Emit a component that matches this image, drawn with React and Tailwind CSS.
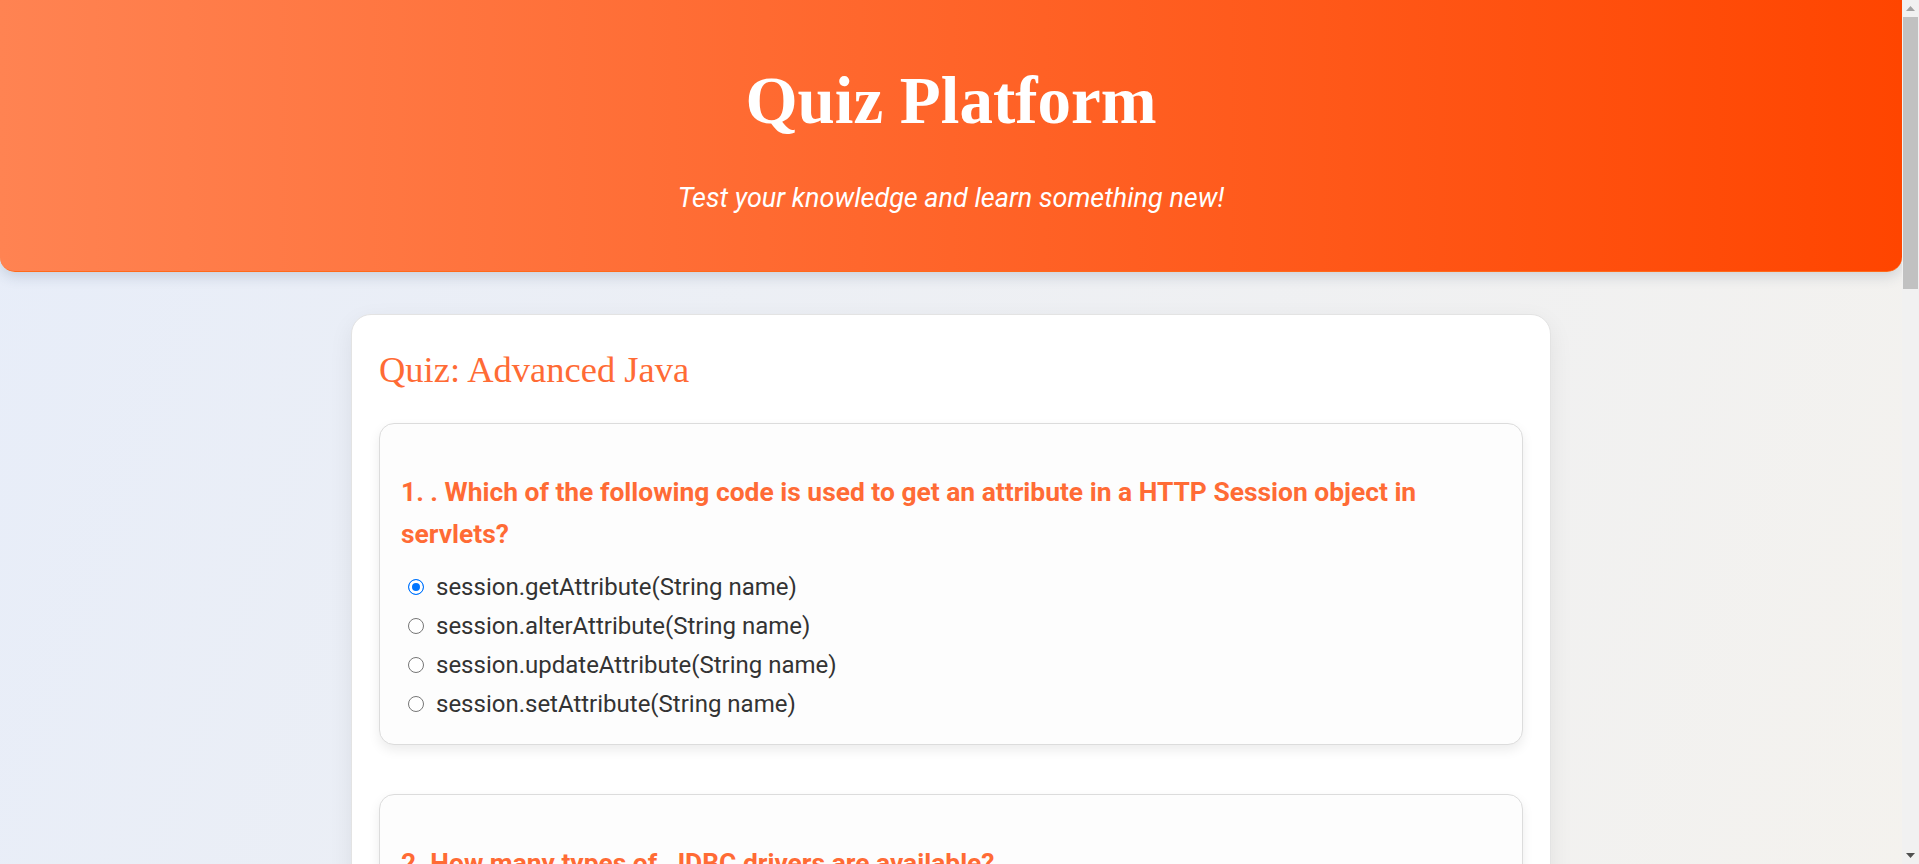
import React, { useState } from "react";

const questions = [
    {
        id: 1,
        text: "1. . Which of the following code is used to get an attribute in a HTTP Session object in servlets?",
        options: [
            "session.getAttribute(String name)",
            "session.alterAttribute(String name)",
            "session.updateAttribute(String name)",
            "session.setAttribute(String name)",
        ],
    },
    {
        id: 2,
        text: "2. How many types of \u00a0JDBC drivers are available?",
        options: ["2", "3", "4", "5"],
    },
    {
        id: 3,
        text: "3. Which of the following is used to execute a stored procedure in JDBC?",
        options: ["Statement", "PreparedStatement", "CallableStatement", "ResultSet"],
    },
];

const QuestionCard = ({ q, selected, onSelect }) => {
    return (
        <div className="border border-[#dcdcdc] rounded-[15px] bg-[#fdfdfd] shadow-[0_5px_12px_rgba(0,0,0,0.08)] pt-[47px] pb-[21px] px-[21px] mb-[49px]">
            <h3 className="font-['Roboto',sans-serif] font-bold text-[26.4px] leading-[42px] text-[#ff6b35]">
                {q.text}
            </h3>
            <div className="mt-[12px] flex flex-col">
                {q.options.map((opt, index) => (
                    <label
                        key={index}
                        className="flex items-center h-[39px] font-['Roboto',sans-serif] text-[24px] text-[#333]"
                    >
                        <input
                            type="radio"
                            name={`q${q.id}`}
                            checked={selected === index}
                            onChange={() => onSelect(index)}
                            className="appearance-none w-[16px] h-[16px] m-0 ml-[7px] mr-[12px] shrink-0 rounded-full border border-[#767676] bg-white checked:border-[1.5px] checked:border-[#0075ff] checked:bg-[#0075ff] checked:shadow-[inset_0_0_0_3px_white]"
                        />
                        <span>{opt}</span>
                    </label>
                ))}
            </div>
        </div>
    );
};

// page scrollbar, as it shows in the screenshot
const ScrollBar = () => (
    <div className="w-[17px] shrink-0 h-screen bg-[#f1f1f1] flex flex-col">
        <div className="h-[17px] flex items-center justify-center">
            <svg width="9" height="5" viewBox="0 0 9 5">
                <path d="M4.5 0L9 5H0Z" fill="#a3a3a3" />
            </svg>
        </div>
        <div className="h-[272px] mx-[1px] bg-[#c1c1c1]" />
        <div className="flex-1" />
        <div className="h-[17px] flex items-center justify-center">
            <svg width="9" height="5" viewBox="0 0 9 5">
                <path d="M0 0H9L4.5 5Z" fill="#505050" />
            </svg>
        </div>
    </div>
);

const App = () => {
    const [answers, setAnswers] = useState({ 1: 0 });

    const handleSelect = (qid, index) => {
        setAnswers((prev) => ({ ...prev, [qid]: index }));
    };

    return (
        <div className="flex h-screen overflow-hidden bg-[linear-gradient(110deg,#e7edf9,#f4f2ee)]">
            <div className="flex-1 min-w-0 h-screen overflow-hidden">
                <header className="rounded-b-[15px] bg-[linear-gradient(90deg,#ff8352,#ff4500)] border-b border-[#ff6a1a] shadow-[0_4px_14px_rgba(40,60,90,0.18)] pt-[61px] pb-[57px] text-center text-white">
                    <h1 className="font-['Liberation_Serif',serif] font-bold text-[67px] leading-[79px]">
                        Quiz Platform
                    </h1>
                    <p className="mt-[42px] font-['Roboto',sans-serif] italic text-[27px] leading-[32px]">
                        Test your knowledge and learn something new!
                    </p>
                </header>

                <main className="w-[1200px] mx-auto mt-[42px] mb-[40px] bg-white border border-[#e3e3e3] rounded-[20px] shadow-[0_8px_24px_rgba(0,0,0,0.07)] pt-[33px] px-[27px] pb-[10px]">
                    <h2 className="font-['Liberation_Serif',serif] text-[36.5px] leading-[43px] text-[#ff6b35] mb-[32px]">
                        Quiz: Advanced Java
                    </h2>
                    {questions.map((q) => (
                        <QuestionCard
                            key={q.id}
                            q={q}
                            selected={answers[q.id]}
                            onSelect={(index) => handleSelect(q.id, index)}
                        />
                    ))}
                </main>
            </div>
            <ScrollBar />
        </div>
    );
};

export default App;
